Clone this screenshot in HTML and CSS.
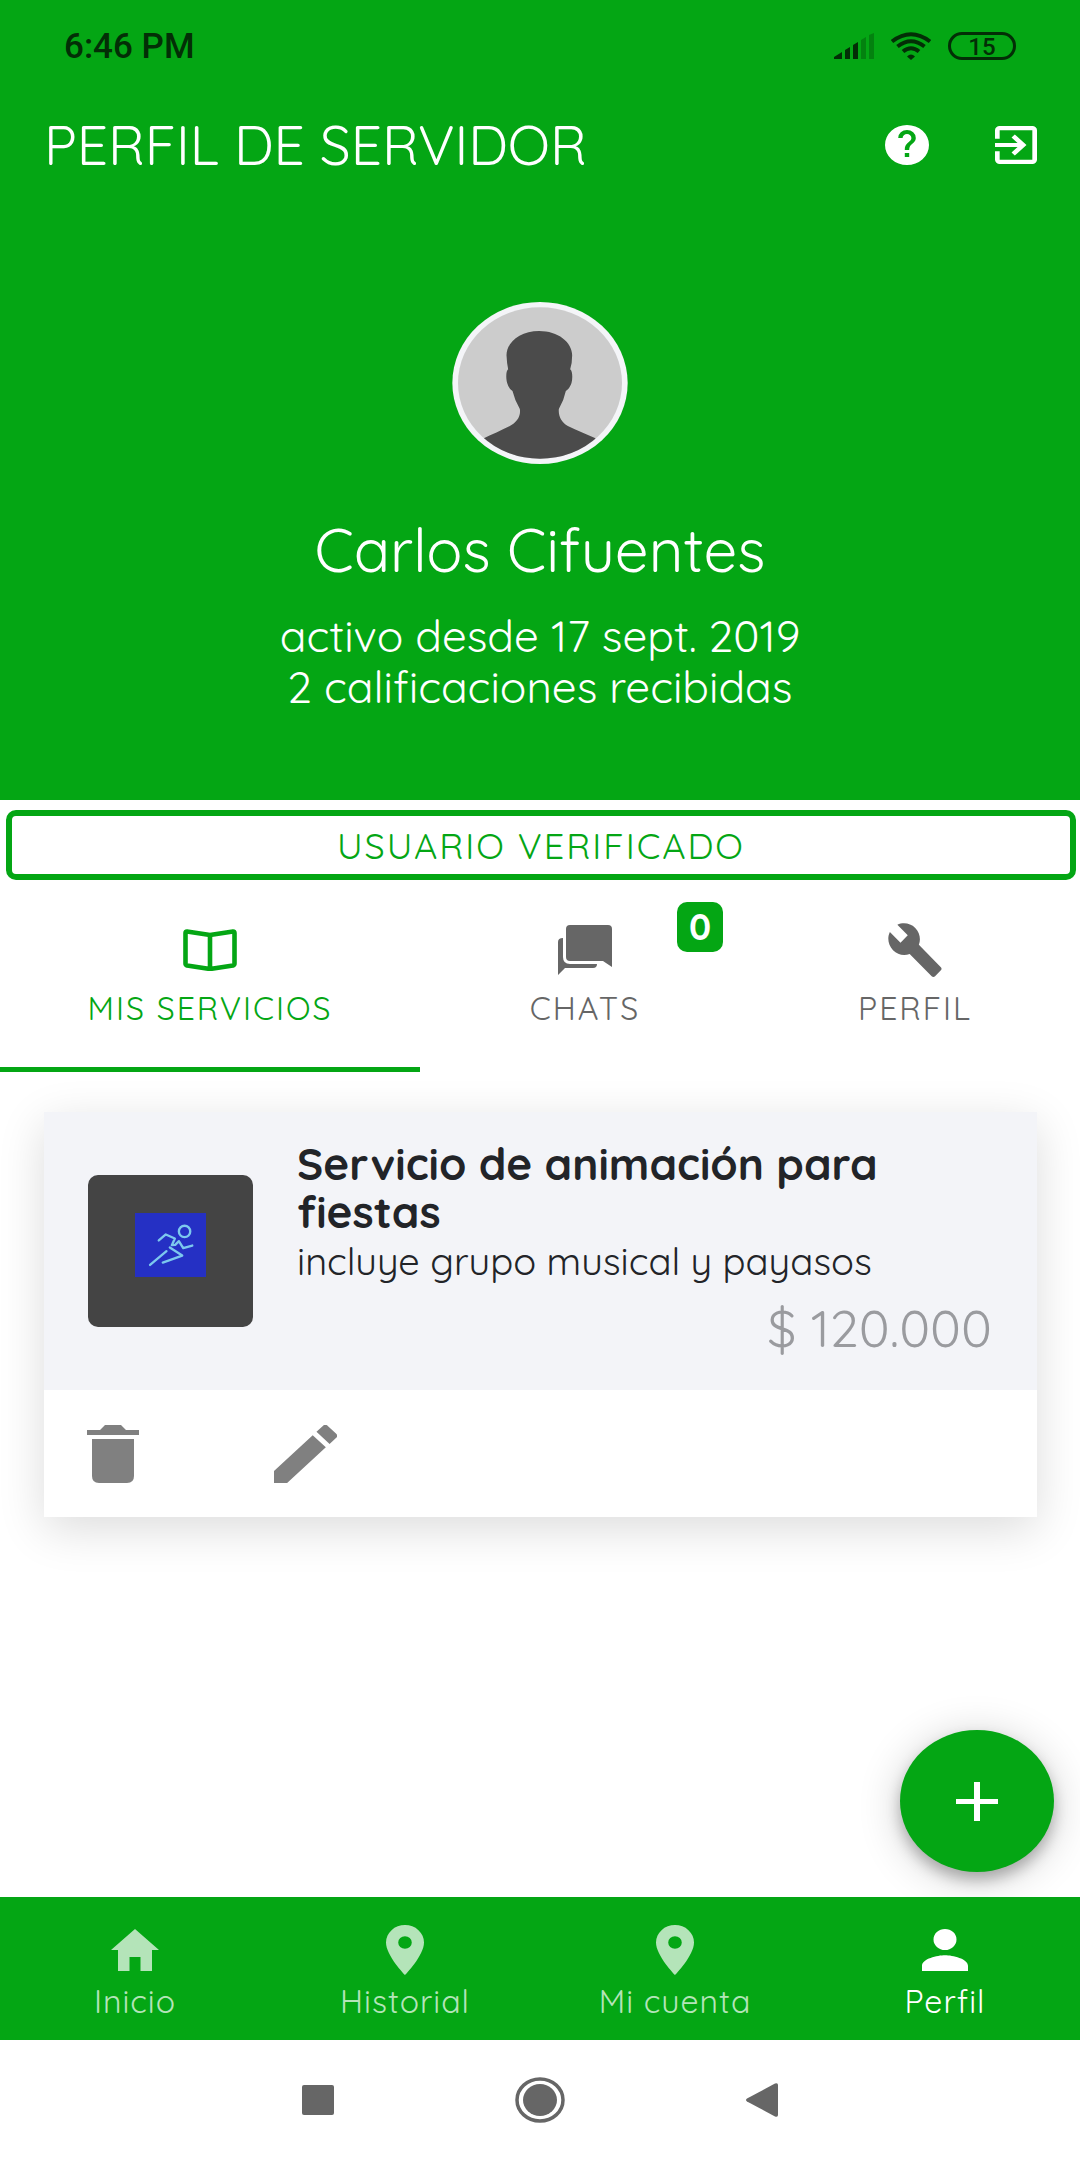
FILE: index.html
```html
<!DOCTYPE html>
<html lang="es">
<head>
  <meta charset="utf-8">
  <meta name="viewport" content="width=device-width, initial-scale=1">
  <title>Perfil de servidor</title>
  <link rel="stylesheet" href="styles.css">
</head>
<body>
  <header class="hero">
    <div class="status-bar">
      <span class="clock">6:46 PM</span>
      <div class="status-icons">
        <svg class="signal" viewBox="0 0 40 26" aria-hidden="true">
          <path d="M0 26v-2l8-5v7zM11 26v-9l5-3v12zM19 26V12l5-3v17z"/>
          <path class="dim" d="M27 26V7l5-3v22zM35 26V2l5-2v26z"/>
        </svg>
        <svg class="wifi" viewBox="0 0 42 28" aria-hidden="true">
          <path class="arc" d="M2 9.500Q21-5 40 9.500M7.500 14.500Q21 4 34.500 14.500M13 19.500Q21 13 29 19.500"/>
          <path d="M21 28l-4-3.500Q21 20.500 25 24.500z"/>
        </svg>
        <span class="battery">15</span>
      </div>
    </div>

    <div class="toolbar">
      <h1 class="page-title">PERFIL DE SERVIDOR</h1>
      <div class="toolbar-actions">
        <button class="icon-button" type="button" aria-label="Ayuda">
          <svg class="icon-help" viewBox="2 2 20 20" preserveAspectRatio="none"><path d="M12 2a10 10 0 1 0 0 20 10 10 0 0 0 0-20zm1 16h-2v-2h2zm2.070-7.250-.9.920C13.450 12.400 13 13 13 14.500h-2V14c0-1.100.45-2.100 1.170-2.830l1.240-1.260c.37-.36.590-.86.590-1.410a2 2 0 1 0-4 0H8a4 4 0 1 1 8 0c0 .88-.36 1.680-.93 2.250z"/></svg>
        </button>
        <button class="icon-button" type="button" aria-label="Salir">
          <svg class="icon-exit" viewBox="3 3 18 18" preserveAspectRatio="none"><path d="M10.090 15.590 11.500 17l5-5-5-5-1.410 1.410L12.670 11H3v2h9.670zM19 3H5a2 2 0 0 0-2 2v4h2V5h14v14H5v-4H3v4a2 2 0 0 0 2 2h14a2 2 0 0 0 2-2V5a2 2 0 0 0-2-2z"/></svg>
        </button>
      </div>
    </div>

    <div class="person">
      <svg class="avatar" viewBox="70 66 527 486" role="img" aria-label="Foto de perfil">
        <defs><clipPath id="face"><ellipse cx="333.500" cy="309" rx="246" ry="227"/></clipPath></defs>
        <ellipse cx="333.500" cy="309" rx="263" ry="243" fill="#f4f5f8"/>
        <ellipse cx="333.500" cy="309" rx="246" ry="227" fill="#ccc"/>
        <path clip-path="url(#face)" fill="#4b4b4b" d="M331 153C275 153 233 186 233 226Q234 250 238 268C231 272 231 296 235 309Q239 325 251 333Q258 362 273 387C277 410 262 428 243 438C215 452 190 463 165 475V552H500V475C472 462 445 452 417 438C399 427 388 410 390 387Q405 362 411 333Q423 325 428 309C432 294 431 272 424 268Q430 250 430 226C430 186 387 153 331 153Z"/>
      </svg>
      <h2 class="person-name">Carlos Cifuentes</h2>
      <p class="person-info">activo desde 17 sept. 2019<br>2 calificaciones recibidas</p>
    </div>
  </header>

  <main class="content">
    <button class="verified" type="button">USUARIO VERIFICADO</button>

    <nav class="tabs" aria-label="Secciones">
      <a class="tab active" href="#servicios" aria-current="page">
        <span class="tab-icon"><svg width="54" height="42" viewBox="0 0 54 42"><path fill="none" stroke="currentColor" stroke-width="4.600" stroke-linejoin="round" d="M27 6 4 2.500Q2.500 2.500 2.500 4V34.500Q2.500 36 4 36.500L27 40 50 36.500Q51.500 36 51.500 34.500V4Q51.500 2.500 50 2.500ZM27 6V40"/></svg></span>
        <span>MIS SERVICIOS</span>
      </a>
      <a class="tab" href="#chats">
        <span class="tab-icon"><svg width="54" height="50" viewBox="0 0 54 50"><path d="M12 0H50Q54 0 54 4V42L45 36H12Q8 36 8 32V4Q8 0 12 0ZM5 13V32Q5 39 12 39H39Q39 43 35 43H7L0 50V17Q0 13 5 13Z"/></svg></span>
        <span>CHATS</span>
        <span class="badge">0</span>
      </a>
      <a class="tab" href="#perfil">
        <span class="tab-icon"><svg width="58" height="54" viewBox="0 1 24 22" preserveAspectRatio="none"><path d="m22.700 19-9.100-9.100c.9-2.300.4-5-1.500-6.900-2-2-5-2.400-7.400-1.300L9 6 6 9 1.600 4.700C.4 7.100.9 10.100 2.900 12.100c1.900 1.900 4.600 2.400 6.900 1.500l9.100 9.100c.4.4 1 .4 1.400 0l2.300-2.300c.5-.4.5-1.100.1-1.400z"/></svg></span>
        <span>PERFIL</span>
      </a>
    </nav>

    <article class="card">
      <div class="card-body">
        <div class="thumb">
          <svg class="runner" viewBox="318 340 212 191" role="img" aria-label="Corredor">
            <rect x="318" y="340" width="212" height="191" fill="#2530c4"/>
            <g fill="none" stroke="#7cc8ee" stroke-width="7" stroke-linejoin="round" stroke-linecap="round">
              <circle cx="466" cy="395" r="17"/>
              <path d="M389 422 410 404 437 416 428 436 438 435 449 424 462 445 489 437M422 443 459 467 401 488M412 454 363 495"/>
            </g>
          </svg>
        </div>
        <div class="card-text">
          <h3 class="card-title">Servicio de animación para fiestas</h3>
          <p class="card-desc">incluye grupo musical y payasos</p>
          <p class="card-price">$ 120.000</p>
        </div>
      </div>
      <div class="card-actions">
        <button class="icon-button" type="button" aria-label="Eliminar">
          <svg width="52" height="58" viewBox="0 0 52 58"><path d="M0 5H13L18 0H34L39 5H52V10H0ZM5 14H47V51Q47 58 40 58H12Q5 58 5 51Z"/></svg>
        </button>
        <button class="icon-button" type="button" aria-label="Editar">
          <svg width="63" height="58" viewBox="3 3 18 18" preserveAspectRatio="none"><path d="M3 17.250V21h3.750L17.810 9.940l-3.750-3.750zM20.710 7.040a1 1 0 0 0 0-1.410l-2.340-2.340a1 1 0 0 0-1.410 0l-1.830 1.830 3.750 3.750z"/></svg>
        </button>
      </div>
    </article>

    <button class="fab" type="button" aria-label="Agregar servicio">
      <svg width="42" height="39" viewBox="0 0 42 39"><path d="M18 0h6v17h18v5H24v17h-6V22H0v-5h18z"/></svg>
    </button>
  </main>

  <nav class="bottom-nav" aria-label="Principal">
    <a class="nav-item" href="#inicio">
      <span class="nav-icon"><svg width="48" height="42" viewBox="0 0 48 42"><path d="M24 0 48 21H41V42H29.500V28H18.500V42H7V21H0Z"/></svg></span>
      <span>Inicio</span>
    </a>
    <a class="nav-item" href="#historial">
      <span class="nav-icon"><svg width="38" height="50" viewBox="5 2 14 20" preserveAspectRatio="none"><path d="M12 2a7 7 0 0 0-7 7c0 5.250 7 13 7 13s7-7.750 7-13a7 7 0 0 0-7-7zm0 9.500a2.500 2.500 0 1 1 0-5 2.500 2.500 0 0 1 0 5z"/></svg></span>
      <span>Historial</span>
    </a>
    <a class="nav-item" href="#cuenta">
      <span class="nav-icon"><svg width="38" height="50" viewBox="5 2 14 20" preserveAspectRatio="none"><path d="M12 2a7 7 0 0 0-7 7c0 5.250 7 13 7 13s7-7.750 7-13a7 7 0 0 0-7-7zm0 9.500a2.500 2.500 0 1 1 0-5 2.500 2.500 0 0 1 0 5z"/></svg></span>
      <span>Mi cuenta</span>
    </a>
    <a class="nav-item active" href="#perfil" aria-current="page">
      <span class="nav-icon"><svg width="46" height="42" viewBox="4 4 16 16" preserveAspectRatio="none"><path d="M12 12a4 4 0 1 0 0-8 4 4 0 0 0 0 8zm0 2c-2.670 0-8 1.340-8 4v2h16v-2c0-2.660-5.330-4-8-4z"/></svg></span>
      <span>Perfil</span>
    </a>
  </nav>

  <div class="system-bar">
    <button class="icon-button" type="button" aria-label="Recientes"><svg width="32" height="30" viewBox="0 0 32 30"><rect width="32" height="30" rx="2"/></svg></button>
    <button class="icon-button" type="button" aria-label="Pantalla de inicio"><svg width="50" height="46" viewBox="0 0 50 46"><ellipse cx="25" cy="23" rx="23" ry="21" fill="none" stroke="currentColor" stroke-width="3.500"/><ellipse cx="25" cy="23" rx="17" ry="16"/></svg></button>
    <button class="icon-button" type="button" aria-label="Atrás"><svg width="32" height="34" viewBox="0 0 32 34"><path d="M1 15.500 29 .5Q32-.5 32 2V32Q32 34.500 29 33.500L1 18.500Q-1 17 1 15.500Z"/></svg></button>
  </div>
</body>
</html>
```
FILE: styles.css
```css
:root {
  --green: #04a614;
  --ink: #222428;
  --grey: #666;
  --tracking: 2px;
}

* {
  box-sizing: border-box;
}

body {
  margin: 0;
  min-height: 100vh;
  display: flex;
  flex-direction: column;
  background: #fff;
  color: var(--ink);
  font-family: Quicksand, Inter, "Open Sans", sans-serif;
  font-weight: 400;
}

h1, h2, h3, p {
  margin: 0;
  font-weight: inherit;
}

a {
  color: inherit;
  text-decoration: none;
}

button {
  font: inherit;
  color: inherit;
  cursor: pointer;
}

svg {
  display: block;
  fill: currentColor;
}

.icon-button {
  padding: 0;
  border: 0;
  background: none;
}

/* Green header */

.hero {
  background: var(--green);
  color: #fff;
}

.status-bar {
  display: flex;
  align-items: center;
  justify-content: space-between;
  height: 92px;
  padding: 0 64px;
  color: #032e06;
}

.clock {
  font-family: Roboto, sans-serif;
  font-size: 35px;
  font-weight: 500;
}

.status-icons {
  display: flex;
  align-items: center;
  gap: 16px;
}

.signal {
  width: 40px;
  height: 26px;
}

.dim {
  opacity: 0.3;
}

.wifi {
  width: 42px;
  height: 28px;
}

.arc {
  fill: none;
  stroke: currentColor;
  stroke-width: 4px;
}

.battery {
  width: 68px;
  height: 28px;
  border: 3px solid;
  border-radius: 14px;
  font-family: Roboto, sans-serif;
  font-size: 24px;
  font-weight: 500;
  line-height: 24px;
  text-align: center;
}

.toolbar {
  display: flex;
  align-items: center;
  justify-content: space-between;
  height: 106px;
  padding: 0 43px 0 44px;
}

.page-title {
  font-size: 55px;
  line-height: 64px;
}

.toolbar-actions {
  display: flex;
  align-items: center;
  gap: 66px;
}

.icon-help {
  width: 44px;
  height: 40px;
}

.icon-exit {
  width: 42px;
  height: 38px;
}

.person {
  display: flex;
  flex-direction: column;
  align-items: center;
  padding: 104px 32px 88px;
  text-align: center;
}

.avatar {
  width: 176px;
  height: 162px;
}

.person-name {
  margin-top: 54px;
  font-size: 60px;
  line-height: 64px;
}

.person-info {
  margin-top: 28px;
  font-size: 44px;
  line-height: 51px;
}

/* Content */

.content {
  position: relative;
  flex: 1;
  display: flex;
  flex-direction: column;
  padding-bottom: 200px;
}

.verified {
  height: 70px;
  margin: 10px 4px 0 6px;
  padding: 0;
  border: 6px solid var(--green);
  border-radius: 10px;
  background: #fff;
  color: var(--green);
  font-size: 36px;
  letter-spacing: var(--tracking);
}

.tabs {
  display: grid;
  grid-template-columns: 14fr 11fr 11fr;
  color: var(--grey);
  font-size: 32px;
  line-height: 36px;
  letter-spacing: var(--tracking);
}

.tab {
  position: relative;
  display: flex;
  flex-direction: column;
  align-items: center;
  gap: 13px;
  padding: 43px 0 41px;
  border-bottom: 5px solid transparent;
}

.tab.active {
  border-color: var(--green);
  color: var(--green);
}

.tab-icon {
  display: grid;
  place-items: center;
  height: 54px;
}

.badge {
  position: absolute;
  top: 22px;
  right: 27px;
  width: 46px;
  height: 50px;
  border-radius: 10px;
  background: var(--green);
  color: #fff;
  font-size: 36px;
  font-weight: 700;
  line-height: 50px;
  letter-spacing: 0;
  text-align: center;
}

.card {
  margin: 40px 43px 0 44px;
  background: #fff;
  box-shadow: 0 12px 44px rgba(0, 0, 0, 0.14);
}

.card-body {
  display: flex;
  align-items: center;
  gap: 44px;
  padding: 0 45px 0 44px;
  background: #f3f4f8;
}

.thumb {
  flex: none;
  display: grid;
  place-items: center;
  width: 165px;
  height: 152px;
  padding-bottom: 12px;
  border-radius: 10px;
  background: #444;
}

.runner {
  width: 71px;
  height: 64px;
}

.card-text {
  flex: 1;
  padding: 28px 0 38px;
}

.card-title {
  font-size: 44px;
  font-weight: 700;
  line-height: 48px;
}

.card-desc {
  font-size: 38px;
  line-height: 50px;
}

.card-price {
  margin-top: 18px;
  color: #9a9b9f;
  font-size: 52px;
  line-height: 48px;
  text-align: right;
}

.card-actions {
  display: flex;
  gap: 135px;
  padding: 35px 43px 34px;
  color: #808080;
}

.fab {
  position: absolute;
  right: 26px;
  bottom: 25px;
  display: grid;
  place-items: center;
  width: 154px;
  height: 142px;
  padding: 0;
  border: 0;
  border-radius: 50%;
  background: var(--green);
  color: #fff;
  box-shadow: 0 8px 14px rgba(0, 0, 0, 0.25), 0 6px 44px rgba(0, 0, 0, 0.2);
}

/* Bottom bars */

.bottom-nav {
  position: relative;
  display: grid;
  grid-template-columns: repeat(4, 1fr);
  background: var(--green);
  color: #b4e4b9;
  font-size: 32px;
  line-height: 36px;
  letter-spacing: 1px;
}

.nav-item {
  display: flex;
  flex-direction: column;
  align-items: center;
  gap: 8px;
  padding: 28px 0 21px;
}

.nav-item.active {
  color: #fff;
}

.nav-icon {
  display: grid;
  place-items: center;
  height: 50px;
}

.system-bar {
  display: grid;
  grid-template-columns: repeat(3, 222px);
  place-content: center;
  place-items: center;
  height: 120px;
  color: var(--grey);
}
```
